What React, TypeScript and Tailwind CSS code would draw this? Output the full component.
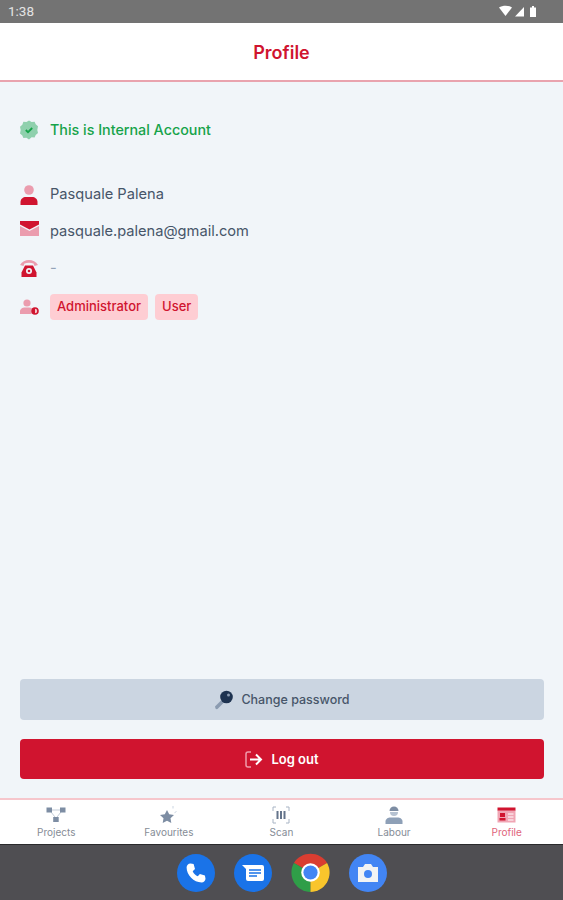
const font = "font-['Inter',sans-serif]";

function ShieldIcon() {
  return (
    <svg width="20" height="20" viewBox="0 0 20 20">
      <path d="M10 .5l2.600 1.500 3-.2 1.100 2.500 2.300 2-.7 3.700.7 3-2.300 2-1.100 2.500-3-.2L10 19.500l-2.600-1.700-3 .2-1.100-2.500-2.300-2 .7-3.500-.7-3.200 2.300-2L4.400 1.800l3 .2z" fill="#8fd0ad" />
      <path d="M6.800 10l2.200 2.200 4.200-4.200" fill="none" stroke="#16a34a" strokeWidth="1.800" />
    </svg>
  );
}

function UserIcon() {
  return (
    <svg width="18" height="20" viewBox="0 0 18 20">
      <circle cx="9" cy="5" r="4.800" fill="#eb9cae" />
      <path d="M0.500 20v-3c0-3 2.500-5 5.500-5h6c3 0 5.500 2 5.500 5v3z" fill="#d0142f" />
    </svg>
  );
}

function MailIcon() {
  return (
    <svg width="19" height="15" viewBox="0 0 19 15">
      <path d="M0 5l9.500 5L19 5v10H0z" fill="#eb9cae" />
      <path d="M0 0h19v3.500l-9.500 5L0 3.500z" fill="#d0142f" />
    </svg>
  );
}

function PhoneIcon() {
  return (
    <svg width="18" height="17" viewBox="0 0 18 17">
      <path d="M0 5C2 1.500 5.500 0 9 0s7 1.500 9 5l-3.500 1-1-2.500C11 2.500 7 2.500 4.500 3.500l-1 2.500z" fill="#eb9cae" />
      <path d="M5 5.500h8l3.500 7V17h-15v-4.500z" fill="#d0142f" />
      <circle cx="9" cy="11" r="3" fill="#f1f5f9" />
      <circle cx="9" cy="11" r="1.300" fill="#d0142f" />
    </svg>
  );
}

function RolesIcon() {
  return (
    <svg width="19" height="16" viewBox="0 0 19 16">
      <circle cx="7" cy="4" r="3.600" fill="#eb9cae" />
      <path d="M0 15v-2.500C0 10 2.500 8.500 5 8.500h4c1.200 0 2.200.3 3 .8-1 1.200-1.200 3.700-.3 5.700z" fill="#eb9cae" />
      <circle cx="15" cy="12" r="3.800" fill="#d0142f" />
      <path d="M15 9.800a2.200 2.200 0 010 4.400z" fill="#f6c6cc" />
    </svg>
  );
}

function KeyIcon() {
  return (
    <svg width="20" height="20" viewBox="0 0 20 20">
      <path d="M1 16.500L9 8.500l2.500 2.500-7.500 7.500a1.500 1.500 0 01-2.500 0z" fill="#8b9bb0" />
      <circle cx="12.500" cy="7" r="6.300" fill="#1e3350" />
      <circle cx="14.500" cy="5" r="1.500" fill="#8b9bb0" />
    </svg>
  );
}

function LogoutIcon() {
  return (
    <svg width="18" height="17" viewBox="0 0 18 17" fill="none">
      <path d="M6 1H3a2 2 0 00-2 2v11a2 2 0 002 2h3" stroke="#f09aab" strokeWidth="1.500" />
      <path d="M5 8.500h11M11 3.500l5 5-5 5" stroke="#fff" strokeWidth="2" />
    </svg>
  );
}

function ProjectsIcon() {
  return (
    <svg width="20" height="16" viewBox="0 0 20 16">
      <path d="M5 3h9M5 5l4 5M15 5l-4 5" stroke="#c3ccd8" strokeWidth="1" />
      <rect x="0.500" y="0.500" width="5.500" height="5" fill="#7d8da3" />
      <rect x="14" y="0.500" width="5.500" height="5" fill="#7d8da3" />
      <rect x="7.200" y="10" width="5.500" height="5" fill="#7d8da3" />
    </svg>
  );
}

function StarIcon() {
  return (
    <svg width="20" height="20" viewBox="0 0 20 20">
      <path d="M8 5l2.200 4.300 4.800.7-3.500 3.300.8 4.700L8 15.800 3.700 18l.8-4.700L1 10l4.800-.7z" fill="#7d8da3" />
      <path d="M14 1v2.500M17.500 6.500l-2 1.200" stroke="#cbd5e1" strokeWidth="1" />
    </svg>
  );
}

function ScanIcon() {
  return (
    <svg width="18" height="18" viewBox="0 0 18 18" fill="none">
      <path d="M4 1H1v4M14 1h3v4M4 17H1v-4M14 17h3v-4" stroke="#a8b4c4" strokeWidth="1" />
      <path d="M5.500 5v8M9 5v8M12.500 5v8" stroke="#64748b" strokeWidth="2" />
    </svg>
  );
}

function LabourIcon() {
  return (
    <svg width="20" height="20" viewBox="0 0 20 20">
      <path d="M5.500 6a4.500 4.500 0 019 0z" fill="#7d8da3" />
      <path d="M6 7h8a4 4 0 01-8 0z" fill="#b6c2d1" />
      <path d="M1.500 19v-2.500C1.500 14 4 12.500 6.500 12.500h7c2.500 0 5 1.500 5 4V19z" fill="#8ea0b7" />
    </svg>
  );
}

function ProfileIcon() {
  return (
    <svg width="19" height="16" viewBox="0 0 19 16">
      <rect x="0.500" y="3" width="18" height="12.500" fill="#f0a5b4" />
      <rect x="0.500" y="0.500" width="18" height="3" fill="#d0142f" />
      <rect x="3" y="6" width="5" height="4" fill="#d0142f" />
      <rect x="2.500" y="11" width="6" height="2.500" fill="#d0142f" />
      <path d="M11 7h5.500M11 10h5.500M11 13h5.500" stroke="#fff" strokeWidth="1" />
    </svg>
  );
}

function Chrome() {
  return (
    <svg width="39" height="39" viewBox="0 0 40 40">
      <path d="M20 20L3 10.200A20 20 0 0137 10.200z" fill="#d93d31" />
      <path d="M20 20L3 10.200A20 20 0 0020 40z" fill="#2f9e48" />
      <path d="M20 20l17-9.800A20 20 0 0120 40z" fill="#f9c52c" />
      <circle cx="20" cy="20" r="9.500" fill="#fff" />
      <circle cx="20" cy="20" r="7.300" fill="#4285f4" />
    </svg>
  );
}

const nav = [
  { label: "Projects", icon: <ProjectsIcon /> },
  { label: "Favourites", icon: <StarIcon /> },
  { label: "Scan", icon: <ScanIcon /> },
  { label: "Labour", icon: <LabourIcon /> },
  { label: "Profile", icon: <ProfileIcon />, active: true },
];

function InfoRow({ icon, children }: { icon: React.ReactNode; children: React.ReactNode }) {
  return (
    <div className="flex h-[37px] items-center">
      <div className="flex w-[30px] shrink-0">{icon}</div>
      {children}
    </div>
  );
}

export default function App() {
  return (
    <div className={`${font} flex h-[900px] flex-col overflow-hidden bg-[#f1f5f9]`}>
      {/* android status bar */}
      <div className="flex h-[23px] shrink-0 items-center justify-between bg-[#737373] pl-2 pr-6 font-['Roboto',sans-serif] text-[13.5px] text-[#e4e4e4]">
        <span>1:38</span>
        <svg width="40" height="13" viewBox="0 0 40 13" fill="#fff">
          <path d="M0 2.500C3.500 0 10 0 13 2.500L6.500 11z" />
          <path d="M16 11.500L25 2v9.500z" />
          <path d="M31 2.500h2V1h2v1.500h2v9.500h-6z" />
        </svg>
      </div>

      <header className="flex h-[59px] shrink-0 items-center justify-center border-b-2 border-[#e9a3ae] bg-white pt-[2px]">
        <h1 className="text-lg font-semibold text-[#d0142f]">Profile</h1>
      </header>

      <main className="flex flex-1 flex-col justify-between pb-[19px] pl-5 pr-[19px] pt-[37px]">
        <div>
          <div className="flex items-center">
            <div className="-ml-[1px] flex w-[31px]">
              <ShieldIcon />
            </div>
            <span className="text-[14.3px] font-medium text-[#16a34a]">This is Internal Account</span>
          </div>
          <div className="mt-[36px] text-[14.65px] text-[#475569]">
            <InfoRow icon={<UserIcon />}>
              <span>Pasquale Palena</span>
            </InfoRow>
            <InfoRow icon={<div className="mb-[6px]"><MailIcon /></div>}>
              <span>pasquale.palena@gmail.com</span>
            </InfoRow>
            <InfoRow icon={<PhoneIcon />}>
              <span className="text-[#94a3b8]">-</span>
            </InfoRow>
            <div className="mt-[1px]">
              <InfoRow icon={<RolesIcon />}>
                <div className="flex gap-[7px] text-[13px] font-medium text-[#d0142f]">
                  <span className="flex h-[26px] items-center rounded bg-[#fecdd3] px-[7px]">Administrator</span>
                  <span className="flex h-[26px] items-center rounded bg-[#fecdd3] px-[7px]">User</span>
                </div>
              </InfoRow>
            </div>
          </div>
        </div>

        <div className="flex flex-col gap-[19px]">
          <button className="flex h-[41px] items-center justify-center gap-[7px] rounded bg-[#cbd5e1] pt-[1px] text-[12.5px] font-medium text-[#475569]">
            <KeyIcon />
            Change password
          </button>
          <button className="flex h-[40px] items-center justify-center gap-2 rounded bg-[#d0142f] pt-[1px] text-[13px] font-semibold text-white">
            <LogoutIcon />
            Log out
          </button>
        </div>
      </main>

      <nav className="grid h-[46px] shrink-0 grid-cols-5 border-t-2 border-[#f6c6cc] bg-white">
        {nav.map((item) => (
          <div
            key={item.label}
            className={`flex flex-col items-center justify-between pb-[6px] pt-[5px] text-[10px] leading-3 ${item.active ? "text-[#e0647a]" : "text-[#858c96]"}`}
          >
            <div className="flex h-[20px] items-center">{item.icon}</div>
            <span>{item.label}</span>
          </div>
        ))}
      </nav>

      {/* android dock */}
      <div className="flex h-[56px] shrink-0 items-center justify-center gap-[19px] border-t border-[#2a2a2c] bg-[#4f4e52]">
        <div className="flex h-[38px] w-[38px] items-center justify-center rounded-full bg-[#1a73e8]">
          <svg width="24" height="24" viewBox="0 0 24 24" fill="#fff">
            <path d="M6.600 2.500l3 .6 1.400 5-2.300 2.100c1 2.300 2.800 4.100 5.100 5.100l2.100-2.300 5 1.400.6 3c.1 2.300-1.700 4-4 4C9.800 21.400 2.600 14.200 2.600 6.500c0-2.300 1.700-4.100 4-4z" />
          </svg>
        </div>
        <div className="flex h-[38px] w-[38px] items-center justify-center rounded-full bg-[#1a73e8]">
          <svg width="24" height="22" viewBox="0 0 24 22">
            <path d="M1 3h20a2 2 0 012 2v12a2 2 0 01-2 2H7a2 2 0 01-2-2V7z" fill="#fff" />
            <path d="M8 8h12M8 11h12M8 14h8" stroke="#1a73e8" strokeWidth="1.500" />
          </svg>
        </div>
        <Chrome />
        <div className="flex h-[38px] w-[38px] items-center justify-center rounded-full bg-[#4285f4]">
          <svg width="24" height="22" viewBox="0 0 24 22">
            <path d="M2 5h5l2-3h6l2 3h5v15H2z" fill="#f1f3f4" />
            <circle cx="12" cy="12" r="4" fill="#4285f4" />
          </svg>
        </div>
      </div>
    </div>
  );
}
